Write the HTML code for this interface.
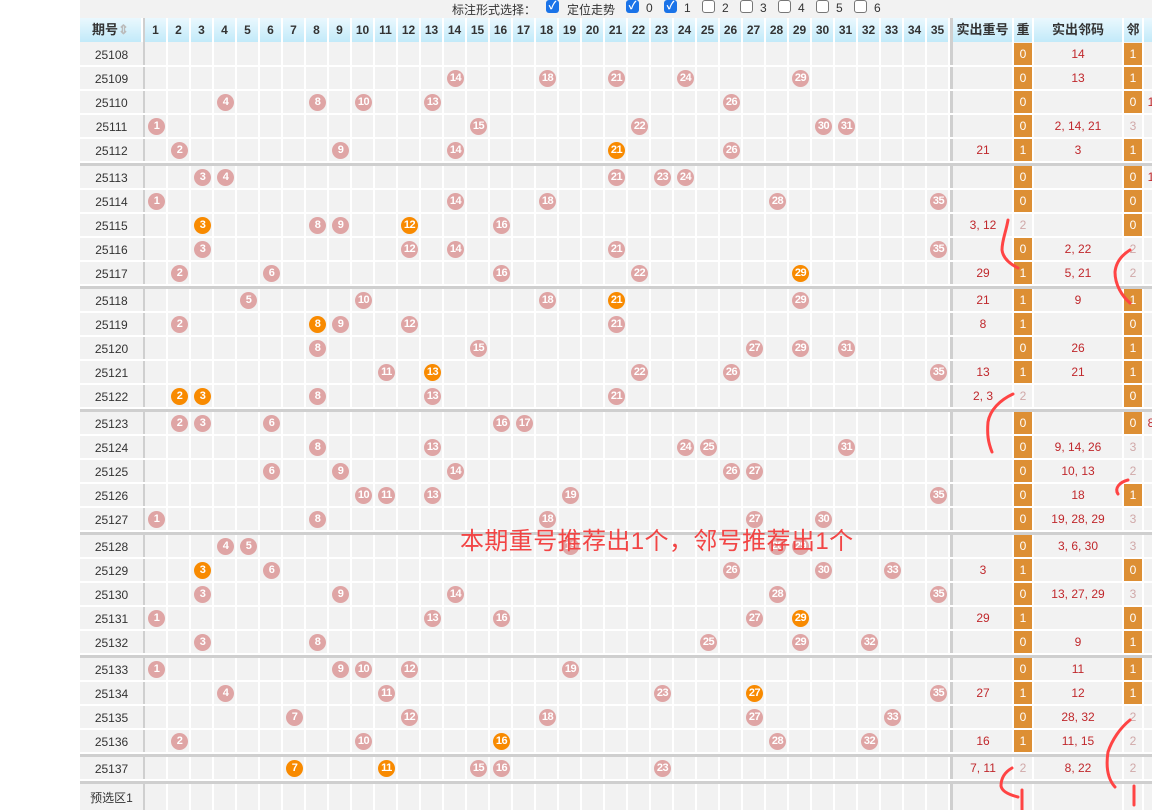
<!DOCTYPE html>
<html><head><meta charset="utf-8"><style>
*{margin:0;padding:0;box-sizing:border-box}
body{width:1152px;height:810px;overflow:hidden;background:#fff;position:relative;font-family:"Liberation Sans","Noto Sans CJK SC",sans-serif;}
#wrap{position:absolute;left:80px;top:0;width:1072px;height:810px;background:#f2f2f2;overflow:hidden}
.top{position:absolute;left:0;top:0;width:1072px;height:18px;font-size:12px;color:#333}
.top span{position:absolute;top:1px;font-size:12px}
.cb{position:absolute;top:0;width:13px;height:13px;border-radius:3px}
.ck{background:#1a73e8;color:#fff;font-size:11px;line-height:13px;text-align:center;font-weight:bold}
.uc{background:#fff;border:1px solid #777}
.hd{position:absolute;top:18px;height:24px;left:0;width:1072px;background:linear-gradient(#eaf8fe,#c2eaf9)}
.h{position:absolute;top:0;height:24px;line-height:24px;text-align:center;font-weight:bold;font-size:12px;color:#333;border-right:2px solid #fff}
.vl{position:absolute;top:18px;left:65px;width:805px;height:792px;background:repeating-linear-gradient(90deg,transparent 0,transparent 21px,#fff 21px,#fff 23px)}
.vl2{position:absolute;top:18px;height:792px;width:2px;background:#fff}
.r{position:absolute;left:0;width:1072px;height:24px;border-bottom:2px solid #fff}
.q{position:absolute;left:0;width:63px;text-align:center;top:5px;font-size:12px;color:#333}
.b{position:absolute;top:3px;width:17px;height:17px;border-radius:50%;background:#dfa5a5;color:#fff;font-size:11px;font-weight:bold;line-height:17px;text-align:center;letter-spacing:-0.5px}
.o{background:#f88a00}
.c1,.c2,.c3,.c4{position:absolute;top:0;height:22px;line-height:22px;text-align:center;font-size:12px;color:#c0282c}
.c1{left:873px;width:60px}
.c2{left:934px;width:18px;color:#fff}
.c3{left:953px;width:90px}
.c4{left:1044px;width:18px;color:#fff}
.or{background:#dd8f34}
.g{color:#d0a8a8!important}
.sep{position:absolute;left:0;width:1072px;height:3px;background:#cfcfcf}
.vs{position:absolute;top:18px;height:792px;width:3px;background:#cfcfcf}
.ann{position:absolute;left:380px;top:521px;font-size:24px;color:#f24545;white-space:nowrap;letter-spacing:0.4px}
</style></head><body>
<div id="wrap">
<div class="top">
<span style="left:372px">标注形式选择：</span>
<div class="cb ck" style="left:466px">✓</div><span style="left:487px">定位走势</span>
<div class="cb ck" style="left:546px">✓</div><span style="left:566px">0</span>
<div class="cb ck" style="left:584px">✓</div><span style="left:604px">1</span>
<div class="cb uc" style="left:622px"></div><span style="left:642px">2</span>
<div class="cb uc" style="left:660px"></div><span style="left:680px">3</span>
<div class="cb uc" style="left:698px"></div><span style="left:718px">4</span>
<div class="cb uc" style="left:736px"></div><span style="left:756px">5</span>
<div class="cb uc" style="left:774px"></div><span style="left:794px">6</span>
</div>
<div class="hd">
<div class="h" style="left:0;width:63px;font-size:13px">期号<span style="color:#bbb">⇕</span></div>
<div class="h" style="left:65px;width:23px">1</div><div class="h" style="left:88px;width:23px">2</div><div class="h" style="left:111px;width:23px">3</div><div class="h" style="left:134px;width:23px">4</div><div class="h" style="left:157px;width:23px">5</div><div class="h" style="left:180px;width:23px">6</div><div class="h" style="left:203px;width:23px">7</div><div class="h" style="left:226px;width:23px">8</div><div class="h" style="left:249px;width:23px">9</div><div class="h" style="left:272px;width:23px">10</div><div class="h" style="left:295px;width:23px">11</div><div class="h" style="left:318px;width:23px">12</div><div class="h" style="left:341px;width:23px">13</div><div class="h" style="left:364px;width:23px">14</div><div class="h" style="left:387px;width:23px">15</div><div class="h" style="left:410px;width:23px">16</div><div class="h" style="left:433px;width:23px">17</div><div class="h" style="left:456px;width:23px">18</div><div class="h" style="left:479px;width:23px">19</div><div class="h" style="left:502px;width:23px">20</div><div class="h" style="left:525px;width:23px">21</div><div class="h" style="left:548px;width:23px">22</div><div class="h" style="left:571px;width:23px">23</div><div class="h" style="left:594px;width:23px">24</div><div class="h" style="left:617px;width:23px">25</div><div class="h" style="left:640px;width:23px">26</div><div class="h" style="left:663px;width:23px">27</div><div class="h" style="left:686px;width:23px">28</div><div class="h" style="left:709px;width:23px">29</div><div class="h" style="left:732px;width:23px">30</div><div class="h" style="left:755px;width:23px">31</div><div class="h" style="left:778px;width:23px">32</div><div class="h" style="left:801px;width:23px">33</div><div class="h" style="left:824px;width:23px">34</div><div class="h" style="left:847px;width:23px">35</div>
<div class="h" style="left:873px;width:61px;font-size:13px">实出重号</div>
<div class="h" style="left:934px;width:20px;font-size:13px">重</div>
<div class="h" style="left:954px;width:90px;font-size:13px">实出邻码</div>
<div class="h" style="left:1044px;width:20px;font-size:13px">邻</div>
</div>
<div class="vl"></div>
<div class="vl2" style="left:932px"></div><div class="vl2" style="left:952px"></div><div class="vl2" style="left:1042px"></div><div class="vl2" style="left:1062px"></div>
<div class="vs" style="left:63px;width:2px"></div>
<div class="vs" style="left:870px"></div>

<div class="sep" style="top:163px"></div><div class="sep" style="top:286px"></div><div class="sep" style="top:409px"></div><div class="sep" style="top:532px"></div><div class="sep" style="top:655px"></div><div class="sep" style="top:754px"></div><div class="sep" style="top:781px"></div>

<div class="r" style="top:43px"><span class="q">25108</span><span class="c2 or">0</span><span class="c3">14</span><span class="c4 or">1</span></div>
<div class="r" style="top:67px"><span class="q">25109</span><b class="b" style="left:367px">14</b><b class="b" style="left:459px">18</b><b class="b" style="left:528px">21</b><b class="b" style="left:597px">24</b><b class="b" style="left:712px">29</b><span class="c2 or">0</span><span class="c3">13</span><span class="c4 or">1</span></div>
<div class="r" style="top:91px"><span class="q">25110</span><b class="b" style="left:137px">4</b><b class="b" style="left:229px">8</b><b class="b" style="left:275px">10</b><b class="b" style="left:344px">13</b><b class="b" style="left:643px">26</b><span class="c2 or">0</span><span class="c4 or">0</span><span class="c1" style="left:1066px;width:10px">1</span></div>
<div class="r" style="top:115px"><span class="q">25111</span><b class="b" style="left:68px">1</b><b class="b" style="left:390px">15</b><b class="b" style="left:551px">22</b><b class="b" style="left:735px">30</b><b class="b" style="left:758px">31</b><span class="c2 or">0</span><span class="c3">2, 14, 21</span><span class="c4 g">3</span></div>
<div class="r" style="top:139px"><span class="q">25112</span><b class="b" style="left:91px">2</b><b class="b" style="left:252px">9</b><b class="b" style="left:367px">14</b><b class="b o" style="left:528px">21</b><b class="b" style="left:643px">26</b><span class="c1">21</span><span class="c2 or">1</span><span class="c3">3</span><span class="c4 or">1</span></div>

<div class="r" style="top:166px"><span class="q">25113</span><b class="b" style="left:114px">3</b><b class="b" style="left:137px">4</b><b class="b" style="left:528px">21</b><b class="b" style="left:574px">23</b><b class="b" style="left:597px">24</b><span class="c2 or">0</span><span class="c4 or">0</span><span class="c1" style="left:1066px;width:10px">1</span></div>
<div class="r" style="top:190px"><span class="q">25114</span><b class="b" style="left:68px">1</b><b class="b" style="left:367px">14</b><b class="b" style="left:459px">18</b><b class="b" style="left:689px">28</b><b class="b" style="left:850px">35</b><span class="c2 or">0</span><span class="c4 or">0</span></div>
<div class="r" style="top:214px"><span class="q">25115</span><b class="b o" style="left:114px">3</b><b class="b" style="left:229px">8</b><b class="b" style="left:252px">9</b><b class="b o" style="left:321px">12</b><b class="b" style="left:413px">16</b><span class="c1">3, 12</span><span class="c2 g">2</span><span class="c4 or">0</span></div>
<div class="r" style="top:238px"><span class="q">25116</span><b class="b" style="left:114px">3</b><b class="b" style="left:321px">12</b><b class="b" style="left:367px">14</b><b class="b" style="left:528px">21</b><b class="b" style="left:850px">35</b><span class="c2 or">0</span><span class="c3">2, 22</span><span class="c4 g">2</span></div>
<div class="r" style="top:262px"><span class="q">25117</span><b class="b" style="left:91px">2</b><b class="b" style="left:183px">6</b><b class="b" style="left:413px">16</b><b class="b" style="left:551px">22</b><b class="b o" style="left:712px">29</b><span class="c1">29</span><span class="c2 or">1</span><span class="c3">5, 21</span><span class="c4 g">2</span></div>

<div class="r" style="top:289px"><span class="q">25118</span><b class="b" style="left:160px">5</b><b class="b" style="left:275px">10</b><b class="b" style="left:459px">18</b><b class="b o" style="left:528px">21</b><b class="b" style="left:712px">29</b><span class="c1">21</span><span class="c2 or">1</span><span class="c3">9</span><span class="c4 or">1</span></div>
<div class="r" style="top:313px"><span class="q">25119</span><b class="b" style="left:91px">2</b><b class="b o" style="left:229px">8</b><b class="b" style="left:252px">9</b><b class="b" style="left:321px">12</b><b class="b" style="left:528px">21</b><span class="c1">8</span><span class="c2 or">1</span><span class="c4 or">0</span></div>
<div class="r" style="top:337px"><span class="q">25120</span><b class="b" style="left:229px">8</b><b class="b" style="left:390px">15</b><b class="b" style="left:666px">27</b><b class="b" style="left:712px">29</b><b class="b" style="left:758px">31</b><span class="c2 or">0</span><span class="c3">26</span><span class="c4 or">1</span></div>
<div class="r" style="top:361px"><span class="q">25121</span><b class="b" style="left:298px">11</b><b class="b o" style="left:344px">13</b><b class="b" style="left:551px">22</b><b class="b" style="left:643px">26</b><b class="b" style="left:850px">35</b><span class="c1">13</span><span class="c2 or">1</span><span class="c3">21</span><span class="c4 or">1</span></div>
<div class="r" style="top:385px"><span class="q">25122</span><b class="b o" style="left:91px">2</b><b class="b o" style="left:114px">3</b><b class="b" style="left:229px">8</b><b class="b" style="left:344px">13</b><b class="b" style="left:528px">21</b><span class="c1">2, 3</span><span class="c2 g">2</span><span class="c4 or">0</span></div>

<div class="r" style="top:412px"><span class="q">25123</span><b class="b" style="left:91px">2</b><b class="b" style="left:114px">3</b><b class="b" style="left:183px">6</b><b class="b" style="left:413px">16</b><b class="b" style="left:436px">17</b><span class="c2 or">0</span><span class="c4 or">0</span><span class="c1" style="left:1066px;width:10px">8</span></div>
<div class="r" style="top:436px"><span class="q">25124</span><b class="b" style="left:229px">8</b><b class="b" style="left:344px">13</b><b class="b" style="left:597px">24</b><b class="b" style="left:620px">25</b><b class="b" style="left:758px">31</b><span class="c2 or">0</span><span class="c3">9, 14, 26</span><span class="c4 g">3</span></div>
<div class="r" style="top:460px"><span class="q">25125</span><b class="b" style="left:183px">6</b><b class="b" style="left:252px">9</b><b class="b" style="left:367px">14</b><b class="b" style="left:643px">26</b><b class="b" style="left:666px">27</b><span class="c2 or">0</span><span class="c3">10, 13</span><span class="c4 g">2</span></div>
<div class="r" style="top:484px"><span class="q">25126</span><b class="b" style="left:275px">10</b><b class="b" style="left:298px">11</b><b class="b" style="left:344px">13</b><b class="b" style="left:482px">19</b><b class="b" style="left:850px">35</b><span class="c2 or">0</span><span class="c3">18</span><span class="c4 or">1</span></div>
<div class="r" style="top:508px"><span class="q">25127</span><b class="b" style="left:68px">1</b><b class="b" style="left:229px">8</b><b class="b" style="left:459px">18</b><b class="b" style="left:666px">27</b><b class="b" style="left:735px">30</b><span class="c2 or">0</span><span class="c3">19, 28, 29</span><span class="c4 g">3</span></div>

<div class="r" style="top:535px"><span class="q">25128</span><b class="b" style="left:137px">4</b><b class="b" style="left:160px">5</b><b class="b" style="left:482px">19</b><b class="b" style="left:689px">28</b><b class="b" style="left:712px">29</b><span class="c2 or">0</span><span class="c3">3, 6, 30</span><span class="c4 g">3</span></div>
<div class="r" style="top:559px"><span class="q">25129</span><b class="b o" style="left:114px">3</b><b class="b" style="left:183px">6</b><b class="b" style="left:643px">26</b><b class="b" style="left:735px">30</b><b class="b" style="left:804px">33</b><span class="c1">3</span><span class="c2 or">1</span><span class="c4 or">0</span></div>
<div class="r" style="top:583px"><span class="q">25130</span><b class="b" style="left:114px">3</b><b class="b" style="left:252px">9</b><b class="b" style="left:367px">14</b><b class="b" style="left:689px">28</b><b class="b" style="left:850px">35</b><span class="c2 or">0</span><span class="c3">13, 27, 29</span><span class="c4 g">3</span></div>
<div class="r" style="top:607px"><span class="q">25131</span><b class="b" style="left:68px">1</b><b class="b" style="left:344px">13</b><b class="b" style="left:413px">16</b><b class="b" style="left:666px">27</b><b class="b o" style="left:712px">29</b><span class="c1">29</span><span class="c2 or">1</span><span class="c4 or">0</span></div>
<div class="r" style="top:631px"><span class="q">25132</span><b class="b" style="left:114px">3</b><b class="b" style="left:229px">8</b><b class="b" style="left:620px">25</b><b class="b" style="left:712px">29</b><b class="b" style="left:781px">32</b><span class="c2 or">0</span><span class="c3">9</span><span class="c4 or">1</span></div>

<div class="r" style="top:658px"><span class="q">25133</span><b class="b" style="left:68px">1</b><b class="b" style="left:252px">9</b><b class="b" style="left:275px">10</b><b class="b" style="left:321px">12</b><b class="b" style="left:482px">19</b><span class="c2 or">0</span><span class="c3">11</span><span class="c4 or">1</span></div>
<div class="r" style="top:682px"><span class="q">25134</span><b class="b" style="left:137px">4</b><b class="b" style="left:298px">11</b><b class="b" style="left:574px">23</b><b class="b o" style="left:666px">27</b><b class="b" style="left:850px">35</b><span class="c1">27</span><span class="c2 or">1</span><span class="c3">12</span><span class="c4 or">1</span></div>
<div class="r" style="top:706px"><span class="q">25135</span><b class="b" style="left:206px">7</b><b class="b" style="left:321px">12</b><b class="b" style="left:459px">18</b><b class="b" style="left:666px">27</b><b class="b" style="left:804px">33</b><span class="c2 or">0</span><span class="c3">28, 32</span><span class="c4 g">2</span></div>
<div class="r" style="top:730px"><span class="q">25136</span><b class="b" style="left:91px">2</b><b class="b" style="left:275px">10</b><b class="b o" style="left:413px">16</b><b class="b" style="left:689px">28</b><b class="b" style="left:781px">32</b><span class="c1">16</span><span class="c2 or">1</span><span class="c3">11, 15</span><span class="c4 g">2</span></div>

<div class="r" style="top:757px"><span class="q">25137</span><b class="b o" style="left:206px">7</b><b class="b o" style="left:298px">11</b><b class="b" style="left:390px">15</b><b class="b" style="left:413px">16</b><b class="b" style="left:574px">23</b><span class="c1">7, 11</span><span class="c2 g">2</span><span class="c3">8, 22</span><span class="c4 g">2</span></div>
<div class="r" style="top:784px;height:30px"><span class="q">预选区1</span></div>

<div class="ann">本期重号推荐出1个，邻号推荐出1个</div>
</div>
<svg style="position:absolute;left:0;top:0" width="1152" height="810" fill="none" stroke="#f44" stroke-width="3" stroke-linecap="round">
<path d="M1008 220 C1006 232 1002 240 1002 250 C1003 258 1010 264 1018 268"/>
<path d="M1130 250 C1122 255 1116 262 1115 272 C1115 285 1122 296 1130 303"/>
<path d="M1013 394 C1000 400 990 410 988 422 C987 434 988 442 992 452"/>
<path d="M1128 480 C1120 482 1114 488 1118 494"/>
<path d="M1012 768 C1005 772 1001 778 1001 786 C1002 792 1010 795 1018 797"/>
<path d="M1022 790 L1022 810"/>
<path d="M1130 720 C1120 728 1112 740 1108 752 C1106 765 1107 778 1115 787"/>
<path d="M1134 786 L1134 805"/>
</svg>
</body></html>
